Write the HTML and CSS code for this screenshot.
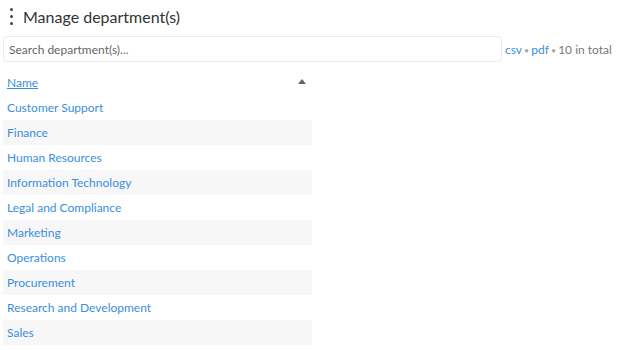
FILE: index.html
```html
<!DOCTYPE html>
<html lang="en">
<head>
    <meta charset="UTF-8">
    <title>Manage department(s)</title>
    <link rel="stylesheet" href="styles.css">
</head>
<body>
    <div class="header">
        <span class="kebab"><i></i><i></i><i></i></span>
        <h1>Manage department(s)</h1>
    </div>
    <div class="toolbar">
        <input type="text" class="search" placeholder="Search department(s)...">
        <div class="meta">
            <a href="#">csv</a><span class="dot">&bull;</span><a href="#">pdf</a><span class="dot">&bull;</span>10 in total
        </div>
    </div>
    <table class="list">
        <thead>
            <tr><th><a href="#">Name</a><span class="sort"></span></th></tr>
        </thead>
        <tbody>
            <tr><td><a href="#">Customer Support</a></td></tr>
            <tr><td><a href="#">Finance</a></td></tr>
            <tr><td><a href="#">Human Resources</a></td></tr>
            <tr><td><a href="#">Information Technology</a></td></tr>
            <tr><td><a href="#">Legal and Compliance</a></td></tr>
            <tr><td><a href="#">Marketing</a></td></tr>
            <tr><td><a href="#">Operations</a></td></tr>
            <tr><td><a href="#">Procurement</a></td></tr>
            <tr><td><a href="#">Research and Development</a></td></tr>
            <tr><td><a href="#">Sales</a></td></tr>
        </tbody>
    </table>
</body>
</html>
```

FILE: styles.css
```css
body {
    font-family: Lato, "Liberation Sans", sans-serif;
    background: #fff;
    color: #333;
    margin: 0;
    padding: 0 3px;
}
.header {
    display: flex;
    align-items: center;
    height: 32px;
}
.kebab {
    display: flex;
    flex-direction: column;
    gap: 4px;
    width: 3px;
    margin: 0 10px 0 7px;
}
.kebab i {
    display: block;
    width: 3px;
    height: 3px;
    border-radius: 50%;
    background: #444;
}
h1 {
    font-size: 16px;
    font-weight: normal;
    color: #333;
    margin: 0;
}
.toolbar {
    display: flex;
    align-items: center;
    gap: 3px;
    margin-top: 4px;
}
.search {
    width: 499px;
    height: 26px;
    box-sizing: border-box;
    border: 1px solid #ebebeb;
    border-radius: 4px;
    padding: 0 5px;
    font-family: inherit;
    font-size: 12px;
    outline: none;
}
.search::placeholder {
    color: #666;
}
.meta {
    font-size: 12px;
    color: #777;
    white-space: nowrap;
}
.meta a {
    color: #3a8ee0;
    text-decoration: none;
}
.dot {
    color: #aaa;
    font-size: 9px;
    margin: 0 2px;
}
.list {
    width: 309px;
    border-collapse: collapse;
    margin-top: 8px;
    font-size: 12px;
}
.list th,
.list td {
    height: 25px;
    padding: 0 4px;
    text-align: left;
    font-weight: normal;
}
.list th {
    position: relative;
}
.list th a {
    color: #3a8ee0;
    text-decoration: underline;
}
.list td a {
    color: #3a8ee0;
    text-decoration: none;
}
.sort {
    position: absolute;
    right: 6px;
    top: 9px;
    border-left: 4px solid transparent;
    border-right: 4px solid transparent;
    border-bottom: 5px solid #666;
}
.list tbody tr:nth-child(even) {
    background: #f7f7f7;
}
```
